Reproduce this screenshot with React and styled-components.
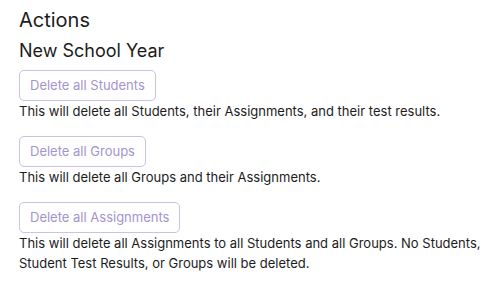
import React from "react";
import styled, { createGlobalStyle } from "styled-components";

const Global = createGlobalStyle`
  html, body { margin: 0; padding: 0; background: #fff; }
  body { font-family: Inter, "Noto Sans", sans-serif; color: #1c1c1c; }
`;

const Page = styled.div`
  padding: 8px 8px 0 19px;
`;

const Title = styled.h1`
  font-size: 20px;
  font-weight: 400;
  line-height: 24px;
  margin: 0 0 8px;
`;

const Subtitle = styled.h2`
  font-size: 18px;
  font-weight: 400;
  line-height: 22px;
  margin: 0 0 8px;
`;

const Action = styled.div`
  display: flex;
  flex-direction: column;
  align-items: flex-start;
  margin-bottom: 15px;
`;

const Button = styled.button`
  font-family: inherit;
  font-size: 13px;
  line-height: 21px;
  padding: 4px 10px;
  background: #fff;
  color: #a494cc;
  border: 1px solid #cbc1e2;
  border-radius: 5px;
  cursor: default;
`;

const Desc = styled.p`
  margin: 0;
  font-size: 13px;
  line-height: 20px;
`;

const actions = [
  { label: "Delete all Students", text: "This will delete all Students, their Assignments, and their test results." },
  { label: "Delete all Groups", text: "This will delete all Groups and their Assignments." },
  { label: "Delete all Assignments", text: "This will delete all Assignments to all Students and all Groups. No Students, Student Test Results, or Groups will be deleted." },
];

export default function App() {
  return (
    <Page>
      <Global />
      <Title>Actions</Title>
      <Subtitle>New School Year</Subtitle>
      {actions.map((a) => (
        <Action key={a.label}>
          <Button disabled>{a.label}</Button>
          <Desc>{a.text}</Desc>
        </Action>
      ))}
    </Page>
  );
}
